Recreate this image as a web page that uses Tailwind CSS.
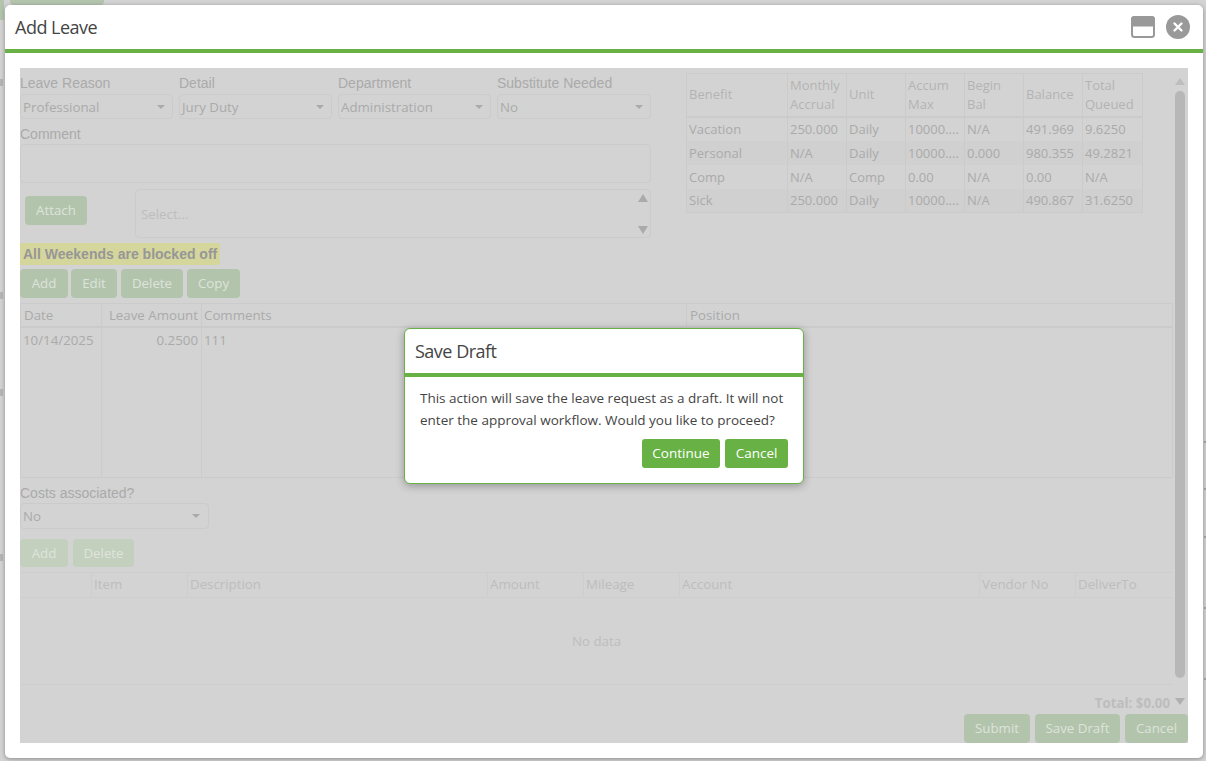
<!DOCTYPE html>
<html lang="en">
  <head>
    <meta charset="UTF-8" />
    <title>Add Leave</title>
    <script src="https://cdn.jsdelivr.net/npm/@tailwindcss/browser@4"></script>
  </head>
  <body class="h-[761px] w-[1206px] overflow-hidden bg-[#d3d3d3] font-['Open_Sans',sans-serif] relative">
    <!-- page behind the dialogs -->
    <div class="absolute left-[10px] top-0 h-[5px] w-[94px] rounded-b bg-[#b3c4ad]"></div>
    <div class="absolute left-0 top-0 h-[20px] w-[4px] bg-[#b3c4ad]"></div>
    <div class="absolute left-0 top-[79px] h-[7px] w-[3px] bg-[#b5b5b5]"></div>
    <div class="absolute left-0 top-[292px] h-[7px] w-[3px] bg-[#b5b5b5]"></div>
    <div class="absolute left-0 top-[389px] h-[7px] w-[3px] bg-[#b5b5b5]"></div>
    <div class="absolute left-0 top-[554px] h-[7px] w-[3px] bg-[#b5b5b5]"></div>
    <div class="absolute right-0 top-[441px] h-[2px] w-[2px] bg-[#a8a8a8]"></div>
    <div class="absolute right-0 top-[488px] h-[2px] w-[2px] bg-[#a8a8a8]"></div>
    <div class="absolute right-0 top-[536px] h-[2px] w-[2px] bg-[#a8a8a8]"></div>
    <div class="absolute right-0 top-[607px] h-[2px] w-[2px] bg-[#a8a8a8]"></div>
    <div class="absolute right-0 top-[678px] h-[2px] w-[2px] bg-[#a8a8a8]"></div>

    <!-- Add Leave window -->
    <div class="absolute left-[5px] top-[5px] w-[1198px] h-[753px] bg-white rounded-[5px] shadow-[0_1px_4px_rgba(0,0,0,0.35)] flex flex-col">
      <div class="h-[44px] flex items-center justify-between pl-[10px] pr-[13px] shrink-0">
        <span class="text-[18px] text-[#444444] tracking-[-0.5px] pt-[1px]">Add Leave</span>
        <div class="flex items-center gap-[11px]">
          <svg width="24" height="22" viewBox="0 0 24 22">
            <rect x="1" y="1" width="22" height="20" rx="2.5" fill="#fff" stroke="#999" stroke-width="2" />
            <path d="M0 3.5a3.5 3.5 0 0 1 3.5-3.5h17a3.5 3.5 0 0 1 3.5 3.5V10.5H0z" fill="#999" />
          </svg>
          <svg width="24" height="24" viewBox="0 0 24 24">
            <circle cx="12" cy="12" r="12" fill="#999" />
            <path d="M8.5 8.5l7 7M15.5 8.5l-7 7" stroke="#fff" stroke-width="2.4" stroke-linecap="round" />
          </svg>
        </div>
      </div>
      <div class="h-[4px] bg-[#67b145] shrink-0"></div>

      <!-- form, greyed out by the overlay -->
      <div class="mx-[15px] mt-[15px] w-[1168px] h-[675px] bg-[#d3d3d3] flex flex-col text-[#aaaaaa] text-[13.3px] leading-[18px] overflow-hidden">
        <div class="flex h-[646px] shrink-0">
          <div class="w-[1153px] shrink-0 flex flex-col">
            <div class="flex h-[176px] shrink-0">
              <div class="w-[631px] shrink-0">
                <div class="grid grid-cols-[153px_153px_153px_154px] gap-x-[6px] pt-[6px]">
                  <div>
                    <label class="block h-[20px] font-['Liberation_Sans',sans-serif] text-[14px]">Leave Reason</label>
                    <div class="h-[25px] border border-[#cbcbcb] rounded-[4px] flex items-center justify-between pl-[2px] pr-[7px]"><span>Professional</span><span class="border-x-[4px] border-t-[4px] border-x-transparent border-t-[#aaaaaa]"></span></div>
                  </div>
                  <div>
                    <label class="block h-[20px] font-['Liberation_Sans',sans-serif] text-[14px]">Detail</label>
                    <div class="h-[25px] border border-[#cbcbcb] rounded-[4px] flex items-center justify-between pl-[2px] pr-[7px]"><span>Jury Duty</span><span class="border-x-[4px] border-t-[4px] border-x-transparent border-t-[#aaaaaa]"></span></div>
                  </div>
                  <div>
                    <label class="block h-[20px] font-['Liberation_Sans',sans-serif] text-[14px]">Department</label>
                    <div class="h-[25px] border border-[#cbcbcb] rounded-[4px] flex items-center justify-between pl-[2px] pr-[7px]"><span>Administration</span><span class="border-x-[4px] border-t-[4px] border-x-transparent border-t-[#aaaaaa]"></span></div>
                  </div>
                  <div>
                    <label class="block h-[20px] font-['Liberation_Sans',sans-serif] text-[14px]">Substitute Needed</label>
                    <div class="h-[25px] border border-[#cbcbcb] rounded-[4px] flex items-center justify-between pl-[2px] pr-[7px]"><span>No</span><span class="border-x-[4px] border-t-[4px] border-x-transparent border-t-[#aaaaaa]"></span></div>
                  </div>
                </div>
                <label class="block mt-[6px] h-[19px] font-['Liberation_Sans',sans-serif] text-[14px]">Comment</label>
                <div class="h-[39px] border border-[#cbcbcb] rounded-[4px]"></div>
                <div class="flex mt-[6px] pl-[5px]">
                  <button class="mt-[7px] h-[29px] w-[62px] rounded-[4px] bg-[#b3c4ad] text-[#dde3da] pb-[1px]">Attach</button>
                  <div class="ml-[48px] w-[516px] h-[49px] border border-[#cbcbcb] rounded-[4px] flex items-center justify-between pl-[5px] pr-[2px]">
                    <span class="text-[#bdbdbd]">Select...</span>
                    <div class="flex flex-col justify-between h-[40px]">
                      <span class="border-x-[5px] border-b-[8px] border-x-transparent border-b-[#aaaaaa]"></span>
                      <span class="border-x-[5px] border-t-[8px] border-x-transparent border-t-[#aaaaaa]"></span>
                    </div>
                  </div>
                </div>
              </div>
              <table class="ml-[35px] mt-[5px] h-[140px] w-[456px] table-fixed self-start border-collapse border border-[#cbcbcb] text-[13px] [&_td]:border-x [&_td]:border-[#cbcbcb] [&_td]:px-[2px] [&_td]:whitespace-nowrap [&_th]:border [&_th]:border-[#cbcbcb] [&_th]:border-b-2 [&_th]:px-[2px] [&_th]:font-normal [&_th]:text-left [&_th]:leading-[19px] [&_th]:text-[#b3b3b3]">
                <colgroup><col class="w-[101px]" /><col class="w-[59px]" /><col class="w-[59px]" /><col class="w-[59px]" /><col class="w-[59px]" /><col class="w-[59px]" /><col class="w-[60px]" /></colgroup>
                <thead>
                  <tr class="h-[43px]"><th>Benefit</th><th>Monthly Accrual</th><th>Unit</th><th>Accum Max</th><th>Begin Bal</th><th>Balance</th><th>Total Queued</th></tr>
                </thead>
                <tbody>
                  <tr class="h-[24px]"><td>Vacation</td><td>250.000</td><td>Daily</td><td>10000....</td><td>N/A</td><td>491.969</td><td>9.6250</td></tr>
                  <tr class="h-[24px] bg-[#d0d0d0]"><td>Personal</td><td>N/A</td><td>Daily</td><td>10000....</td><td>0.000</td><td>980.355</td><td>49.2821</td></tr>
                  <tr class="h-[24px]"><td>Comp</td><td>N/A</td><td>Comp</td><td>0.00</td><td>N/A</td><td>0.00</td><td>N/A</td></tr>
                  <tr class="h-[24px] bg-[#d0d0d0] [&_td]:pb-[1px]"><td>Sick</td><td>250.000</td><td>Daily</td><td>10000....</td><td>N/A</td><td>490.867</td><td>31.6250</td></tr>
                </tbody>
              </table>
            </div>

            <div class="mt-[-1px] h-[22px] w-[200px] shrink-0 bg-[#d5d69c] pl-[3px] flex items-center font-['Liberation_Sans',sans-serif] font-bold text-[14px] text-[#979797]">All Weekends are blocked off</div>
            <div class="flex gap-[3px] mt-[4px] shrink-0">
              <button class="h-[29px] w-[48px] rounded-[4px] bg-[#b3c4ad] text-[#dde3da] pb-[2px]">Add</button>
              <button class="h-[29px] w-[46px] rounded-[4px] bg-[#b3c4ad] text-[#dde3da] pb-[2px]">Edit</button>
              <button class="ml-[1px] h-[29px] w-[62px] rounded-[4px] bg-[#b3c4ad] text-[#dde3da] pb-[2px]">Delete</button>
              <button class="ml-[1px] h-[29px] w-[53px] rounded-[4px] bg-[#b3c4ad] text-[#dde3da] pb-[2px]">Copy</button>
            </div>

            <div class="mt-[5px] h-[175px] shrink-0 border border-[#cbcbcb] flex flex-col">
              <div class="h-[24px] shrink-0 grid grid-cols-[80px_100px_485px_1fr] border-b-2 border-[#cbcbcb] items-center">
                <span class="pl-[3px]">Date</span>
                <span class="pr-[3px] text-right border-l border-[#cbcbcb] h-full leading-[22px]">Leave Amount</span>
                <span class="pl-[2px] border-l border-[#cbcbcb] h-full leading-[22px]">Comments</span>
                <span class="pl-[3px] border-l border-[#cbcbcb] h-full leading-[22px]">Position</span>
              </div>
              <div class="flex-1 grid grid-cols-[80px_100px_485px_1fr]">
                <span class="pl-[2px] pt-[3px]">10/14/2025</span>
                <span class="pr-[3px] pt-[3px] text-right border-l border-[#cbcbcb]">0.2500</span>
                <span class="pl-[2px] pt-[3px] border-l border-[#cbcbcb]">111</span>
                <span></span>
              </div>
            </div>

            <label class="block mt-[6px] h-[19px] shrink-0 font-['Liberation_Sans',sans-serif] text-[14px]">Costs associated?</label>
            <div class="h-[26px] w-[189px] shrink-0 border border-[#cbcbcb] rounded-[4px] flex items-center justify-between pl-[2px] pr-[8px]"><span>No</span><span class="border-x-[4px] border-t-[4px] border-x-transparent border-t-[#aaaaaa]"></span></div>

            <div class="flex gap-[5px] mt-[10px] shrink-0">
              <button class="h-[28px] w-[48px] rounded-[4px] bg-[#c3d0be] text-[#dfe4dc]">Add</button>
              <button class="h-[28px] w-[61px] rounded-[4px] bg-[#c3d0be] text-[#dfe4dc]">Delete</button>
            </div>

            <div class="mt-[5px] flex-1 flex flex-col text-[#bdbdbd]">
              <div class="h-[26px] shrink-0 grid grid-cols-[71px_96px_300px_96px_96px_300px_96px_1fr] border-y border-[#cecece] items-center">
                <span></span>
                <span class="pl-[2px] border-l border-[#cecece] h-full leading-[22px]">Item</span>
                <span class="pl-[2px] border-l border-[#cecece] h-full leading-[22px]">Description</span>
                <span class="pl-[2px] border-l border-[#cecece] h-full leading-[22px]">Amount</span>
                <span class="pl-[2px] border-l border-[#cecece] h-full leading-[22px]">Mileage</span>
                <span class="pl-[2px] border-l border-[#cecece] h-full leading-[22px]">Account</span>
                <span class="pl-[2px] border-l border-[#cecece] h-full leading-[22px]">Vendor No</span>
                <span class="pl-[2px] border-l border-[#cecece] h-full leading-[22px]">DeliverTo</span>
              </div>
              <div class="h-[87px] shrink-0 border-b border-[#cecece] flex items-center justify-center">No data</div>
              <div class="flex-1 flex items-start justify-end pt-[9px] pr-[3px] font-bold text-[#bdbdbd]">Total: $0.00</div>
            </div>
          </div>

          <!-- scrollbar -->
          <div class="w-[15px] shrink-0 flex flex-col items-center pt-[10px] pb-[9px] pr-[2px]">
            <span class="border-x-[5px] border-b-[7px] border-x-transparent border-b-[#bdbdbd]"></span>
            <div class="w-[10px] h-[587px] mt-[6px] rounded-full bg-[#b7b7b7]"></div>
            <span class="mt-auto border-x-[5px] border-t-[7px] border-x-transparent border-t-[#b0b0b0]"></span>
          </div>
        </div>

        <div class="flex justify-end gap-[5px] shrink-0">
          <button class="h-[29px] w-[66px] rounded-[4px] bg-[#b3c4ad] text-[#dde3da] pb-[2px]">Submit</button>
          <button class="h-[29px] w-[85px] rounded-[4px] bg-[#b3c4ad] text-[#dde3da] pb-[2px]">Save Draft</button>
          <button class="h-[29px] w-[63px] rounded-[4px] bg-[#b3c4ad] text-[#dde3da] pb-[2px]">Cancel</button>
        </div>
      </div>
    </div>

    <!-- Save Draft dialog -->
    <div class="absolute left-[404px] top-[328px] w-[400px] h-[156px] bg-white border border-[#67b145] rounded-[6px] shadow-[0_2px_8px_rgba(0,0,0,0.3)] flex flex-col text-[#444444]">
      <div class="h-[44px] flex items-center pl-[10px] pt-[1px] text-[18px] tracking-[-0.5px] shrink-0">Save Draft</div>
      <div class="h-[4px] bg-[#67b145] shrink-0"></div>
      <p class="px-[15px] pt-[10px] text-[13.5px] leading-[22px] whitespace-nowrap">This action will save the leave request as a draft. It will not<br />enter the approval workflow. Would you like to proceed?</p>
      <div class="flex justify-end gap-[5px] pr-[15px] mt-[8px]">
        <button class="h-[29px] w-[78px] rounded-[3px] bg-[#67b145] text-white text-[13.5px]">Continue</button>
        <button class="h-[29px] w-[63px] rounded-[3px] bg-[#67b145] text-white text-[13.5px]">Cancel</button>
      </div>
    </div>
  </body>
</html>
